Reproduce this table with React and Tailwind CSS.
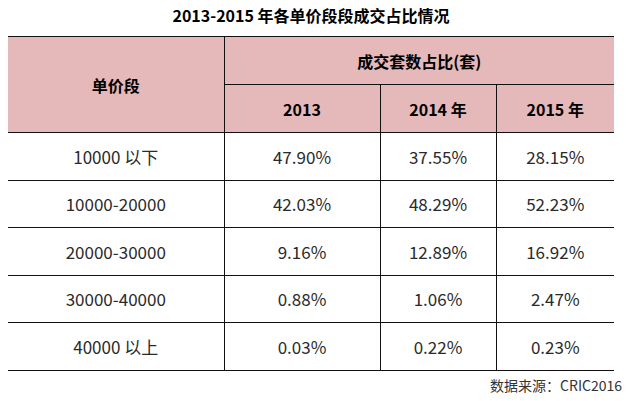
const rows = [
  ["10000 以下", "47.90%", "37.55%", "28.15%"],
  ["10000-20000", "42.03%", "48.29%", "52.23%"],
  ["20000-30000", "9.16%", "12.89%", "16.92%"],
  ["30000-40000", "0.88%", "1.06%", "2.47%"],
  ["40000 以上", "0.03%", "0.22%", "0.23%"],
];

export default function App() {
  return (
    <div
      className="w-[632px] h-[401px] bg-white text-[#222] overflow-hidden"
      style={{ fontFamily: '"Noto Sans CJK SC", "Noto Sans", sans-serif' }}
    >
      {/* Title */}
      <div className="pl-2 w-[614px] pt-[4px] h-[36px] text-center text-[16px] font-bold leading-[22px] text-black">
        2013-2015 年各单价段段成交占比情况
      </div>

      <table className="ml-2 w-[606px] border-collapse table-fixed">
        <colgroup>
          <col className="w-[216px]" />
          <col className="w-[156px]" />
          <col className="w-[116px]" />
          <col className="w-[118px]" />
        </colgroup>
        <thead className="bg-[#e5b8b9] text-black font-bold text-[16px]">
          <tr className="h-[48px] border-t border-[#111]">
            <th rowSpan={2} className="border-r border-[#111] font-bold">
              单价段
            </th>
            <th colSpan={3} className="font-bold border-b border-[#111]">
              成交套数占比(套)
            </th>
          </tr>
          <tr className="h-[48px]">
            <th className="border-r border-[#111] font-bold">2013</th>
            <th className="border-r border-[#111] font-bold">2014 年</th>
            <th className="font-bold">2015 年</th>
          </tr>
        </thead>
        <tbody className="text-[17px] text-[#2a2a2a]">
          {rows.map((r) => (
            <tr key={r[0]} className="h-[47.5px] border-t border-b border-[#111]">
              <td className="text-center border-r border-[#111]">{r[0]}</td>
              <td className="text-center border-r border-[#111]">{r[1]}</td>
              <td className="text-center border-r border-[#111]">{r[2]}</td>
              <td className="text-center">{r[3]}</td>
            </tr>
          ))}
        </tbody>
      </table>

      {/* Source */}
      <div className="w-[622px] text-right text-[14px] text-[#333] pt-[5px] leading-[18px]">
        数据来源：CRIC2016
      </div>
    </div>
  );
}
